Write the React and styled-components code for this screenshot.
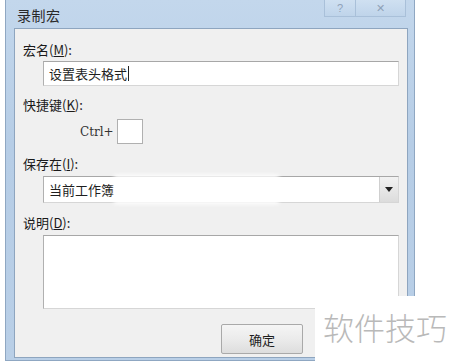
import React from 'react';
import styled, { createGlobalStyle } from 'styled-components';

const GlobalStyle = createGlobalStyle`
    html, body {
        margin: 0;
        padding: 0;
        background: #ffffff;
    }
    body {
        font-family: "Noto Sans CJK SC", "Liberation Sans", sans-serif;
        width: 450px;
        height: 363px;
        overflow: hidden;
    }
`;

const Page = styled.div`
    position: relative;
    width: 450px;
    height: 363px;
    padding-left: 5px;
    box-sizing: border-box;
`;

const Window = styled.div`
    width: 410px;
    height: 361px;
    box-sizing: border-box;
    display: flex;
    flex-direction: column;
    background: linear-gradient(180deg, #c3d7ec 0%, #b6cde6 40%, #b9cfe7 100%);
    border: 1px solid #8fa7c2;
    border-top: none;
    padding: 0 6px 2px 8px;
`;

const TitleBar = styled.div`
    height: 28px;
    display: flex;
    align-items: flex-start;
    justify-content: space-between;
    flex-shrink: 0;
`;

const Title = styled.div`
    font-size: 14px;
    color: #2a2a2a;
    margin: 5px 0 0 3px;
    letter-spacing: 0.5px;
`;

const Caption = styled.div`
    display: flex;
    margin-right: 2px;
`;

const CaptionBtn = styled.div`
    width: ${p => p.w}px;
    height: 17px;
    box-sizing: border-box;
    border: 1px solid #a9c0d9;
    border-top: none;
    border-left: ${p => p.first ? '1px solid #a9c0d9' : 'none'};
    background: linear-gradient(180deg, #cfe0f1, #bfd4ea);
    display: flex;
    align-items: center;
    justify-content: center;
    color: #8fa2b8;
    font-family: "Liberation Sans", sans-serif;
    font-size: 11px;
`;

const Panel = styled.div`
    flex: 1;
    background: #f0f0f0;
    border: 1px solid #8ea5bf;
    box-sizing: border-box;
    padding: 12px 8px 0 8px;
    display: flex;
    flex-direction: column;
`;

const Label = styled.div`
    font-size: 13px;
    line-height: 18px;
    color: #1a1a1a;
    margin-top: ${p => p.mt || 0}px;
    u {
        text-decoration: underline;
    }
`;

const Field = styled.div`
    margin: ${p => p.mt || 0}px 0 0 20px;
    height: ${p => p.h}px;
    box-sizing: border-box;
    background: #ffffff;
    border: 1px solid #b5b5b5;
    border-color: #a7a7a7 #d6d6d6 #d6d6d6 #b0b0b0;
    display: flex;
    align-items: center;
    font-size: 13px;
    color: #1e1e1e;
    padding-left: 5px;
    position: relative;
`;

const Caret = styled.span`
    display: inline-block;
    width: 1px;
    height: 15px;
    background: #222;
    margin-left: 1px;
`;

const ShortcutRow = styled.div`
    display: flex;
    align-items: center;
    margin: 5px 0 0 57px;
    gap: 3px;
`;

const CtrlText = styled.span`
    font-family: "DejaVu Serif", "Liberation Serif", serif;
    font-size: 12px;
    color: #333;
`;

const KeyBox = styled.div`
    width: 26px;
    height: 25px;
    box-sizing: border-box;
    background: #fff;
    border: 1px solid #b0b0b0;
`;

const DropBtn = styled.div`
    position: absolute;
    right: 0;
    top: 0;
    bottom: 0;
    width: 18px;
    background: linear-gradient(180deg, #f2f2f2, #dcdcdc);
    border-left: 1px solid #cfcfcf;
    display: flex;
    align-items: center;
    justify-content: center;
`;

const Smear = styled.div`
    position: absolute;
    left: 70px;
    top: -2px;
    width: 165px;
    height: 29px;
    background: #ffffff;
    filter: blur(2px);
`;

const Footer = styled.div`
    display: flex;
    margin: 15px 0 0 198px;
`;

const Button = styled.div`
    width: 82px;
    height: 30px;
    box-sizing: border-box;
    border: 1px solid #a9a9a9;
    border-radius: 2px;
    background: linear-gradient(180deg, #f5f5f5 0%, #ebebeb 50%, #dddddd 100%);
    display: flex;
    align-items: center;
    justify-content: center;
    font-size: 13px;
    color: #1e1e1e;
`;

const Watermark = styled.div`
    position: absolute;
    left: 315px;
    top: 296px;
    width: 135px;
    height: 67px;
    background: #ffffff;
    display: flex;
    align-items: center;
    padding: 0 0 6px 8px;
    box-sizing: border-box;
    font-size: 31px;
    color: #b9b9b9;
    font-weight: 300;
`;

const App = () => {
    return (
        <Page>
            <GlobalStyle />
            <Window>
                <TitleBar>
                    <Title>录制宏</Title>
                    <Caption>
                        <CaptionBtn w={32} first>?</CaptionBtn>
                        <CaptionBtn w={50}>✕</CaptionBtn>
                    </Caption>
                </TitleBar>
                <Panel>
                    <Label>宏名(<u>M</u>):</Label>
                    <Field h={25} mt={2}>设置表头格式<Caret /></Field>
                    <Label mt={10}>快捷键(<u>K</u>):</Label>
                    <ShortcutRow>
                        <CtrlText>Ctrl+</CtrlText>
                        <KeyBox />
                    </ShortcutRow>
                    <Label mt={11}>保存在(<u>I</u>):</Label>
                    <Field h={27} mt={3}>
                        当前工作簿
                        <Smear />
                        <DropBtn>
                            <svg width="8" height="5" viewBox="0 0 8 5">
                                <path d="M0 0 L8 0 L4 5 Z" fill="#222" />
                            </svg>
                        </DropBtn>
                    </Field>
                    <Label mt={11}>说明(<u>D</u>):</Label>
                    <Field h={74} mt={3} />
                    <Footer>
                        <Button>确定</Button>
                    </Footer>
                </Panel>
            </Window>
            <Watermark>软件技巧</Watermark>
        </Page>
    );
};

export default App;
